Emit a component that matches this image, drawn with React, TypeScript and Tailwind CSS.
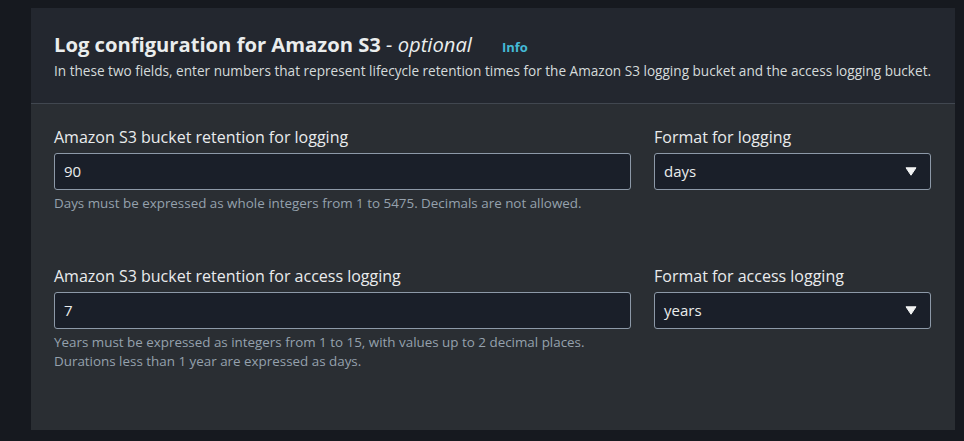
import React from 'react';

function Field({
  label,
  value,
  hint,
}: {
  label: string;
  value: string;
  hint?: string[];
}) {
  return (
    <div className="flex flex-col">
      <label className="text-[16px] leading-[20px] text-[#e9ebed]">{label}</label>
      <div className="mt-[6px] flex h-[37px] items-center rounded-[3px] border border-[#8d99a8] bg-[#1a1f29] px-[9px] text-[15px] text-[#eaeded]">
        {value}
      </div>
      {hint && (
        <div className="mt-[4px] text-[13.4px] leading-[19px] text-[#95a1ad]">
          {hint.map((h, i) => (
            <p key={i}>{h}</p>
          ))}
        </div>
      )}
    </div>
  );
}

function SelectField({ label, value }: { label: string; value: string }) {
  return (
    <div className="flex flex-col">
      <label className="text-[16px] leading-[20px] text-[#e9ebed]">{label}</label>
      <div className="mt-[6px] flex h-[37px] items-center justify-between rounded-[3px] border border-[#8d99a8] bg-[#1a1f29] pl-[9px] pr-[13px] text-[15px] text-[#eaeded]">
        <span>{value}</span>
        <svg width="12" height="9" viewBox="0 0 12 9">
          <path d="M1 0.8 H11 L6 8.2 Z" fill="#f2f3f3" stroke="#f2f3f3" strokeWidth="1" strokeLinejoin="round" />
        </svg>
      </div>
    </div>
  );
}

export default function App() {
  return (
    <div
      className="h-[441px] w-[964px] bg-[#16191f] pl-[31px] pr-[9px] pt-[8px]"
      style={{ fontFamily: '"Open Sans", sans-serif' }}
    >
      <div className="h-[422px] bg-[#2a2e33]">
        <div className="border-b border-[#414750] bg-[#23272f] px-[23px] pb-[22px] pt-[22px]">
          <div className="flex items-baseline">
            <h2 className="text-[20.2px] font-bold leading-[28px] text-[#eaeded]">
              Log configuration for Amazon S3{' '}
              <span className="font-normal italic">- optional</span>
            </h2>
            <a className="ml-[30px] text-[13px] font-bold text-[#44b9d6]">Info</a>
          </div>
          <p className="mt-[3px] whitespace-nowrap text-[13.6px] leading-[20px] text-[#d5dbdb]">
            In these two fields, enter numbers that represent lifecycle retention times for the Amazon S3
            logging bucket and the access logging bucket.
          </p>
        </div>
        <div className="grid grid-cols-[577px_277px] gap-x-[23px] gap-y-[53px] px-[23px] pt-[23px]">
          <Field
            label="Amazon S3 bucket retention for logging"
            value="90"
            hint={['Days must be expressed as whole integers from 1 to 5475. Decimals are not allowed.']}
          />
          <SelectField label="Format for logging" value="days" />
          <Field
            label="Amazon S3 bucket retention for access logging"
            value="7"
            hint={[
              'Years must be expressed as integers from 1 to 15, with values up to 2 decimal places.',
              'Durations less than 1 year are expressed as days.',
            ]}
          />
          <SelectField label="Format for access logging" value="years" />
        </div>
      </div>
    </div>
  );
}
